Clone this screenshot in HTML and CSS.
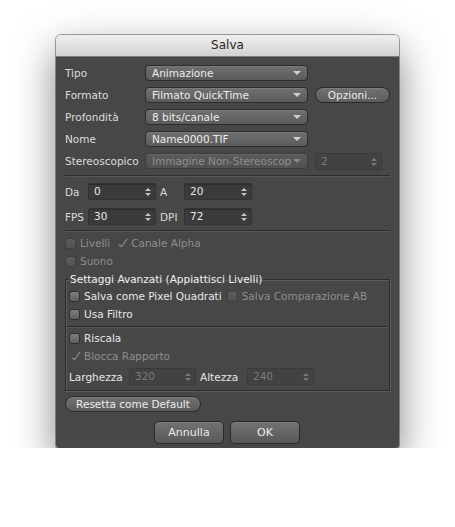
FILE: index.html
```html
<!DOCTYPE html>
<html>
<head>
<meta charset="utf-8">
<link rel="stylesheet" href="styles.css">
</head>
<body>
<div class="dialog">
  <div class="titlebar">Salva</div>
  <div class="body">
    <div class="row">
      <span class="lbl">Tipo</span>
      <div class="select">Animazione<i class="arrow"></i></div>
    </div>
    <div class="row">
      <span class="lbl">Formato</span>
      <div class="select">Filmato QuickTime<i class="arrow"></i></div>
      <div class="pill opz">Opzioni...</div>
    </div>
    <div class="row">
      <span class="lbl">Profondità</span>
      <div class="select">8 bits/canale<i class="arrow"></i></div>
    </div>
    <div class="row">
      <span class="lbl">Nome</span>
      <div class="select">Name0000.TIF<i class="arrow"></i></div>
    </div>
    <div class="row">
      <span class="lbl">Stereoscopico</span>
      <div class="select disabled"><span class="clip">Immagine Non-Stereoscopico</span><i class="arrow"></i></div>
      <div class="field disabled stereo">2<i class="spin"></i></div>
    </div>

    <div class="sep sep1"></div>

    <div class="nrow">
      <span class="nlbl">Da</span>
      <div class="field num">0<i class="spin"></i></div>
      <span class="nlbl2">A</span>
      <div class="field num">20<i class="spin"></i></div>
    </div>
    <div class="nrow second">
      <span class="nlbl">FPS</span>
      <div class="field num">30<i class="spin"></i></div>
      <span class="nlbl2">DPI</span>
      <div class="field num">72<i class="spin"></i></div>
    </div>

    <div class="sep sep2"></div>

    <div class="crow">
      <span class="cb off"></span><span class="dim">Livelli</span>
      <span class="cb off checked gap"></span><span class="dim">Canale Alpha</span>
    </div>
    <div class="crow">
      <span class="cb off"></span><span class="dim">Suono</span>
    </div>

    <fieldset class="group">
      <legend>Settaggi Avanzati (Appiattisci Livelli)</legend>
      <div class="crow first">
        <span class="cb"></span><span class="on">Salva come Pixel Quadrati</span>
        <span class="cb off gap2"></span><span class="dim">Salva Comparazione AB</span>
      </div>
      <div class="crow">
        <span class="cb"></span><span class="on">Usa Filtro</span>
      </div>
      <div class="sep sep3"></div>
      <div class="crow">
        <span class="cb"></span><span class="on">Riscala</span>
      </div>
      <div class="crow">
        <span class="cb off checked"></span><span class="dim">Blocca Rapporto</span>
      </div>
      <div class="nrow size">
        <span class="slbl">Larghezza</span>
        <div class="field disabled sz">320<i class="spin"></i></div>
        <span class="slbl2">Altezza</span>
        <div class="field disabled sz">240<i class="spin"></i></div>
      </div>
    </fieldset>

    <div class="pill reset">Resetta come Default</div>

    <div class="buttons">
      <div class="btn">Annulla</div>
      <div class="btn">OK</div>
    </div>
  </div>
</div>
</body>
</html>
```

FILE: styles.css
```css
html, body {
  margin: 0;
  padding: 0;
  background: #ffffff;
}
body {
  font-family: "Lucida Grande", "DejaVu Sans", sans-serif;
  font-size: 10.5px;
  color: #dcdcdc;
}
.dialog {
  width: 343px;
  margin: 35px 0 0 56px;
  border-radius: 5px 5px 3px 3px;
  overflow: hidden;
  box-shadow: 0 0 0 1px rgba(0, 0, 0, 0.35), 0 16px 40px rgba(0, 0, 0, 0.5);
}
.titlebar {
  height: 21px;
  line-height: 21px;
  text-align: center;
  font-size: 12px;
  color: #262626;
  background: linear-gradient(#efefef, #d2d2d2);
  border-bottom: 1px solid #7e7e7e;
}
.body {
  background: #474747;
  padding: 8px 9px 4px 9px;
}
.row {
  display: flex;
  align-items: center;
  height: 16px;
  margin-bottom: 6px;
}
.lbl {
  width: 80px;
  flex: none;
  color: #dcdcdc;
}
.select {
  position: relative;
  box-sizing: border-box;
  width: 163px;
  height: 16px;
  line-height: 14px;
  padding-left: 6px;
  border: 1px solid #2c2c2c;
  border-radius: 4px;
  background: linear-gradient(#707070, #5b5b5b);
  color: #ececec;
  box-shadow: inset 0 1px 0 rgba(255, 255, 255, 0.08);
  overflow: hidden;
  white-space: nowrap;
}
.select .clip {
  display: block;
  width: 140px;
  overflow: hidden;
}
.arrow {
  position: absolute;
  right: 6px;
  top: 5px;
  width: 0;
  height: 0;
  border-left: 4px solid transparent;
  border-right: 4px solid transparent;
  border-top: 4px solid #cfcfcf;
}
.select.disabled {
  background: linear-gradient(#5a5a5a, #525252);
  border-color: #3c3c3c;
  color: #8e8e8e;
}
.select.disabled .arrow {
  border-top-color: #888888;
}
.pill {
  box-sizing: border-box;
  height: 16px;
  line-height: 14px;
  text-align: center;
  border: 1px solid #2a2a2a;
  border-radius: 8px;
  background: linear-gradient(#727272, #5c5c5c);
  color: #ececec;
  box-shadow: inset 0 1px 0 rgba(255, 255, 255, 0.08);
}
.opz {
  width: 75px;
  margin-left: 7px;
}
.field {
  position: relative;
  box-sizing: border-box;
  height: 17px;
  line-height: 15px;
  padding-left: 5px;
  border: 1px solid #323232;
  border-radius: 2px;
  background: #3b3b3b;
  color: #e6e6e6;
  box-shadow: inset 0 1px 0 rgba(0, 0, 0, 0.25);
}
.field.disabled {
  background: #424242;
  border-color: #3a3a3a;
  color: #7c7c7c;
  box-shadow: none;
}
.stereo {
  width: 67px;
  margin-left: 7px;
}
.spin {
  position: absolute;
  right: 4px;
  top: 4px;
  width: 6px;
  height: 8px;
}
.spin::before, .spin::after {
  content: "";
  position: absolute;
  left: 0;
  width: 0;
  height: 0;
  border-left: 3px solid transparent;
  border-right: 3px solid transparent;
}
.spin::before {
  top: 0;
  border-bottom: 3px solid #c4c4c4;
}
.spin::after {
  bottom: 0;
  border-top: 3px solid #c4c4c4;
}
.field.disabled .spin::before { border-bottom-color: #7a7a7a; }
.field.disabled .spin::after { border-top-color: #7a7a7a; }
.sep {
  height: 0;
  border-top: 1px solid #2e2e2e;
  border-bottom: 1px solid #575757;
}
.sep1 {
  margin: 3px 0 6px 0;
}
.sep2 {
  margin: 5px 0 5px 0;
}
.nrow {
  display: flex;
  align-items: center;
  height: 17px;
}
.nrow.second {
  margin-top: 8px;
}
.nlbl {
  width: 23px;
  flex: none;
}
.nlbl2 {
  width: 28px;
  flex: none;
  padding-left: 4px;
  box-sizing: border-box;
}
.num {
  width: 68px;
}
.crow {
  display: flex;
  align-items: center;
  height: 12px;
  margin-bottom: 6px;
  white-space: nowrap;
}
.cb {
  position: relative;
  box-sizing: border-box;
  width: 11px;
  height: 11px;
  flex: none;
  margin-right: 4px;
  border: 1px solid #2e2e2e;
  border-radius: 3px;
  background: linear-gradient(#7c7c7c, #606060);
}
.cb.off {
  border-color: #3e3e3e;
  background: linear-gradient(#5c5c5c, #525252);
}
.cb.checked {
  border-color: transparent;
  background: transparent;
}
.cb.checked::after {
  content: "";
  position: absolute;
  left: 4px;
  top: -2px;
  width: 3px;
  height: 9px;
  border-right: 1.5px solid #9a9a9a;
  border-bottom: 1.5px solid #9a9a9a;
  transform: rotate(35deg);
}
.gap {
  margin-left: 6px;
}
.gap2 {
  margin-left: 5px;
}
.dim {
  color: #8e8e8e;
}
.on {
  color: #e8e8e8;
}
.group {
  margin: 6px 0 0 0;
  padding: 4px 4px 5px 3px;
  border: 1px solid #2e2e2e;
  box-shadow: 1px 1px 0 #5a5a5a, inset 1px 1px 0 #5a5a5a;
  min-width: 0;
}
.group legend {
  padding: 0 1px;
  margin-left: 0;
  line-height: 13px;
  color: #f0f0f0;
}
.sep3 {
  margin: 0 -4px 4px -3px;
}
.size {
  margin-top: 0;
}
.slbl {
  width: 60px;
  flex: none;
  color: #e4e4e4;
}
.slbl2 {
  width: 51px;
  flex: none;
  padding-left: 4px;
  box-sizing: border-box;
  color: #e4e4e4;
}
.sz {
  width: 67px;
}
.reset {
  width: 136px;
  margin-top: 5px;
}
.buttons {
  display: flex;
  justify-content: center;
  gap: 6px;
  margin-top: 9px;
  margin-left: -1px;
}
.btn {
  box-sizing: border-box;
  width: 70px;
  height: 23px;
  line-height: 21px;
  text-align: center;
  font-size: 11px;
  border: 1px solid #2a2a2a;
  border-radius: 5px;
  background: linear-gradient(#727272, #595959);
  color: #ececec;
  box-shadow: inset 0 1px 0 rgba(255, 255, 255, 0.08);
}
```
